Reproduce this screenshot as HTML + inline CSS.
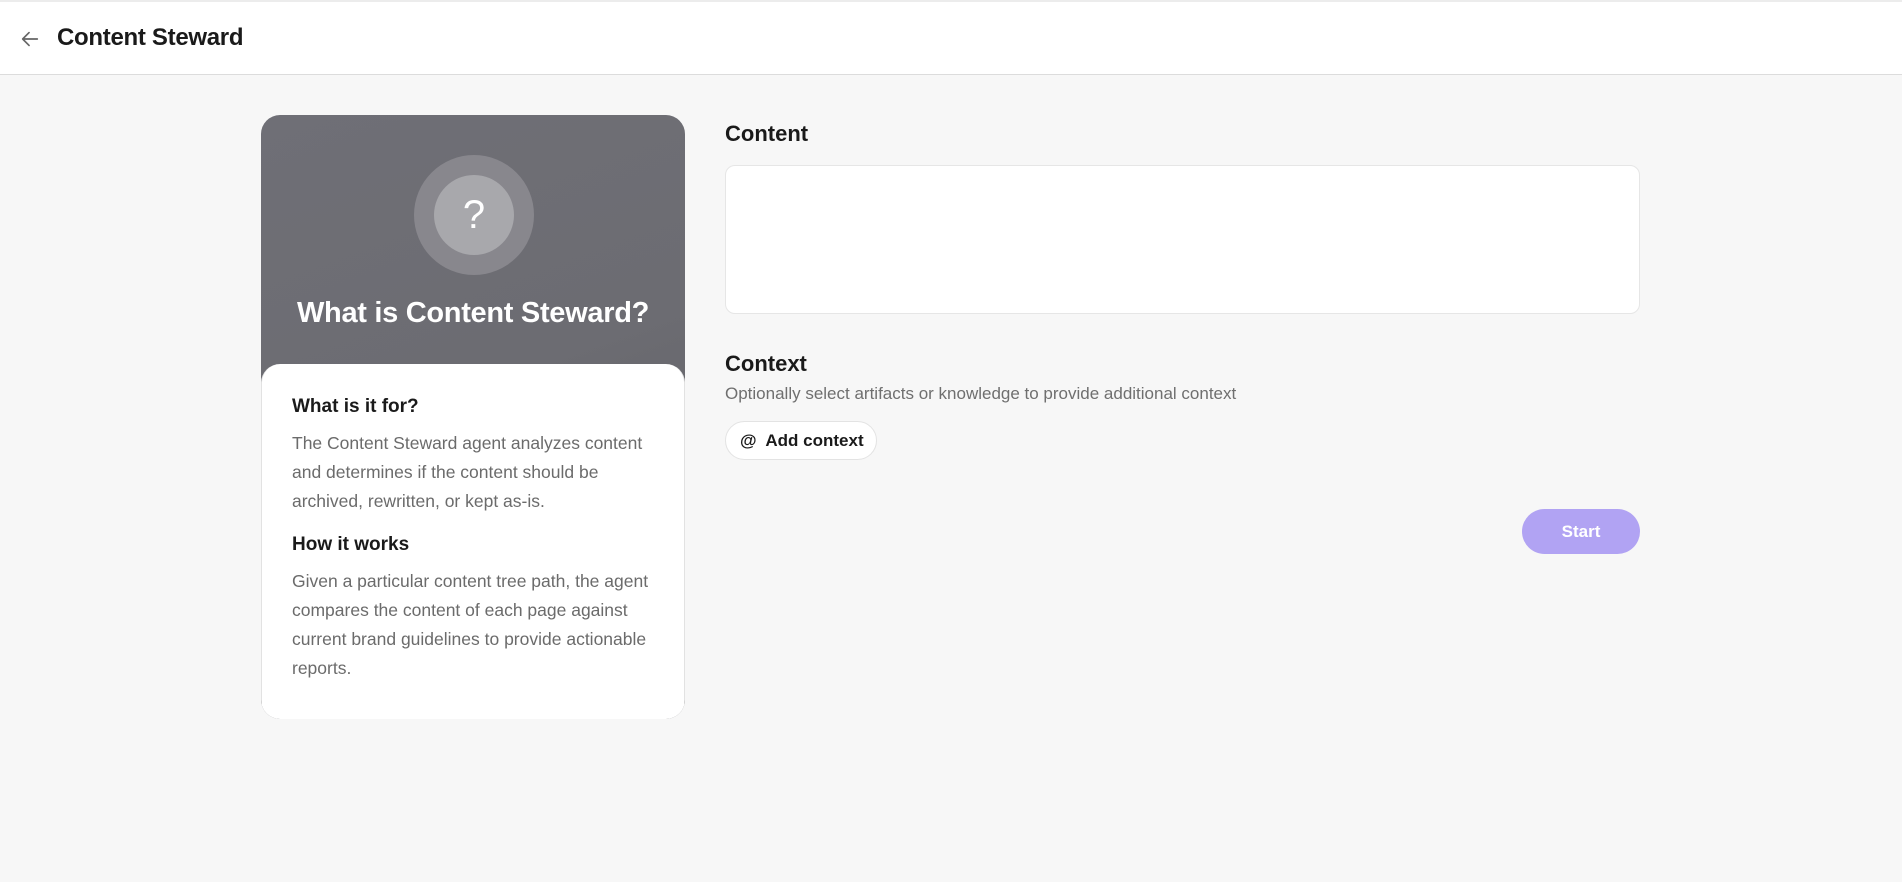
<!DOCTYPE html>
<html><head><meta charset="utf-8"><style>
*{box-sizing:border-box;margin:0;padding:0}
body{width:1902px;height:882px;background:#f7f7f7;font-family:"Liberation Sans",sans-serif;position:relative;overflow:hidden;color:#1a1a1a}
.hdr{position:absolute;left:0;top:0;width:1902px;height:75px;background:#fff;border-top:2px solid #ececec;border-bottom:1px solid #dcdcdc}
.hdr svg{position:absolute;left:19px;top:26px}
.hdr h1{position:absolute;left:57px;top:22px;font-size:24px;font-weight:600;letter-spacing:-0.3px}
.card{position:absolute;left:261px;top:115px;width:424px;height:604px;border-radius:19px;overflow:hidden;background:linear-gradient(160deg,#6f6f76 0%,#6c6c72 45%,#5c5c60 100%)}
.c1{position:absolute;left:153px;top:40px;width:120px;height:120px;border-radius:50%;background:#88878d}
.c2{position:absolute;left:20px;top:20px;width:80px;height:80px;border-radius:50%;background:#a8a8ac;color:#fff;font-size:40px;text-align:center;line-height:80px}
.ct{position:absolute;left:0;width:100%;top:182px;text-align:center;color:#fff;font-size:29px;font-weight:700;letter-spacing:-0.3px}
.wb{position:absolute;left:0;top:249px;width:100%;height:360px;background:#fff;border-radius:19px 19px 0 0;padding:32px 30px;border:1px solid #e2e2e2;border-top:none}
.wb h3{font-size:19px;font-weight:600;margin-bottom:11px}
.wb p{font-size:17.5px;line-height:29px;color:#6b6b6b;margin-bottom:18px}
.lbl{position:absolute;left:725px;font-size:22px;font-weight:600}
.ta{position:absolute;left:725px;top:165px;width:915px;height:149px;background:#fff;border:1px solid #e6e6e6;border-radius:10px}
.sub{position:absolute;left:725px;top:384px;font-size:17px;color:#6f6f6f}
.add{position:absolute;left:725px;top:421px;width:152px;height:39px;border:1px solid #e3e3e3;border-radius:20px;background:#fff;font-size:17px;font-weight:600;line-height:37px;padding-left:14px}
.start{position:absolute;left:1522px;top:509px;width:118px;height:45px;border-radius:23px;background:#b1a3f3;color:#fff;font-size:17px;font-weight:700;text-align:center;line-height:45px}
</style></head><body>
<div class="hdr">
<svg width="22" height="22" viewBox="0 0 24 24" fill="none" stroke="#666" stroke-width="1.8" stroke-linecap="round" stroke-linejoin="round"><path d="M20 12H4M11 5l-7 7 7 7"/></svg>
<h1>Content Steward</h1>
</div>
<div class="card">
<div class="c1"><div class="c2">?</div></div>
<div class="ct">What is Content Steward?</div>
<div class="wb">
<h3>What is it for?</h3>
<p>The Content Steward agent analyzes content and determines if the content should be archived, rewritten, or kept as-is.</p>
<h3>How it works</h3>
<p>Given a particular content tree path, the agent compares the content of each page against current brand guidelines to provide actionable reports.</p>
</div>
</div>
<div class="lbl" style="top:121px">Content</div>
<div class="ta"></div>
<div class="lbl" style="top:351px">Context</div>
<div class="sub">Optionally select artifacts or knowledge to provide additional context</div>
<div class="add">@&nbsp; Add context</div>
<div class="start">Start</div>
</body></html>
